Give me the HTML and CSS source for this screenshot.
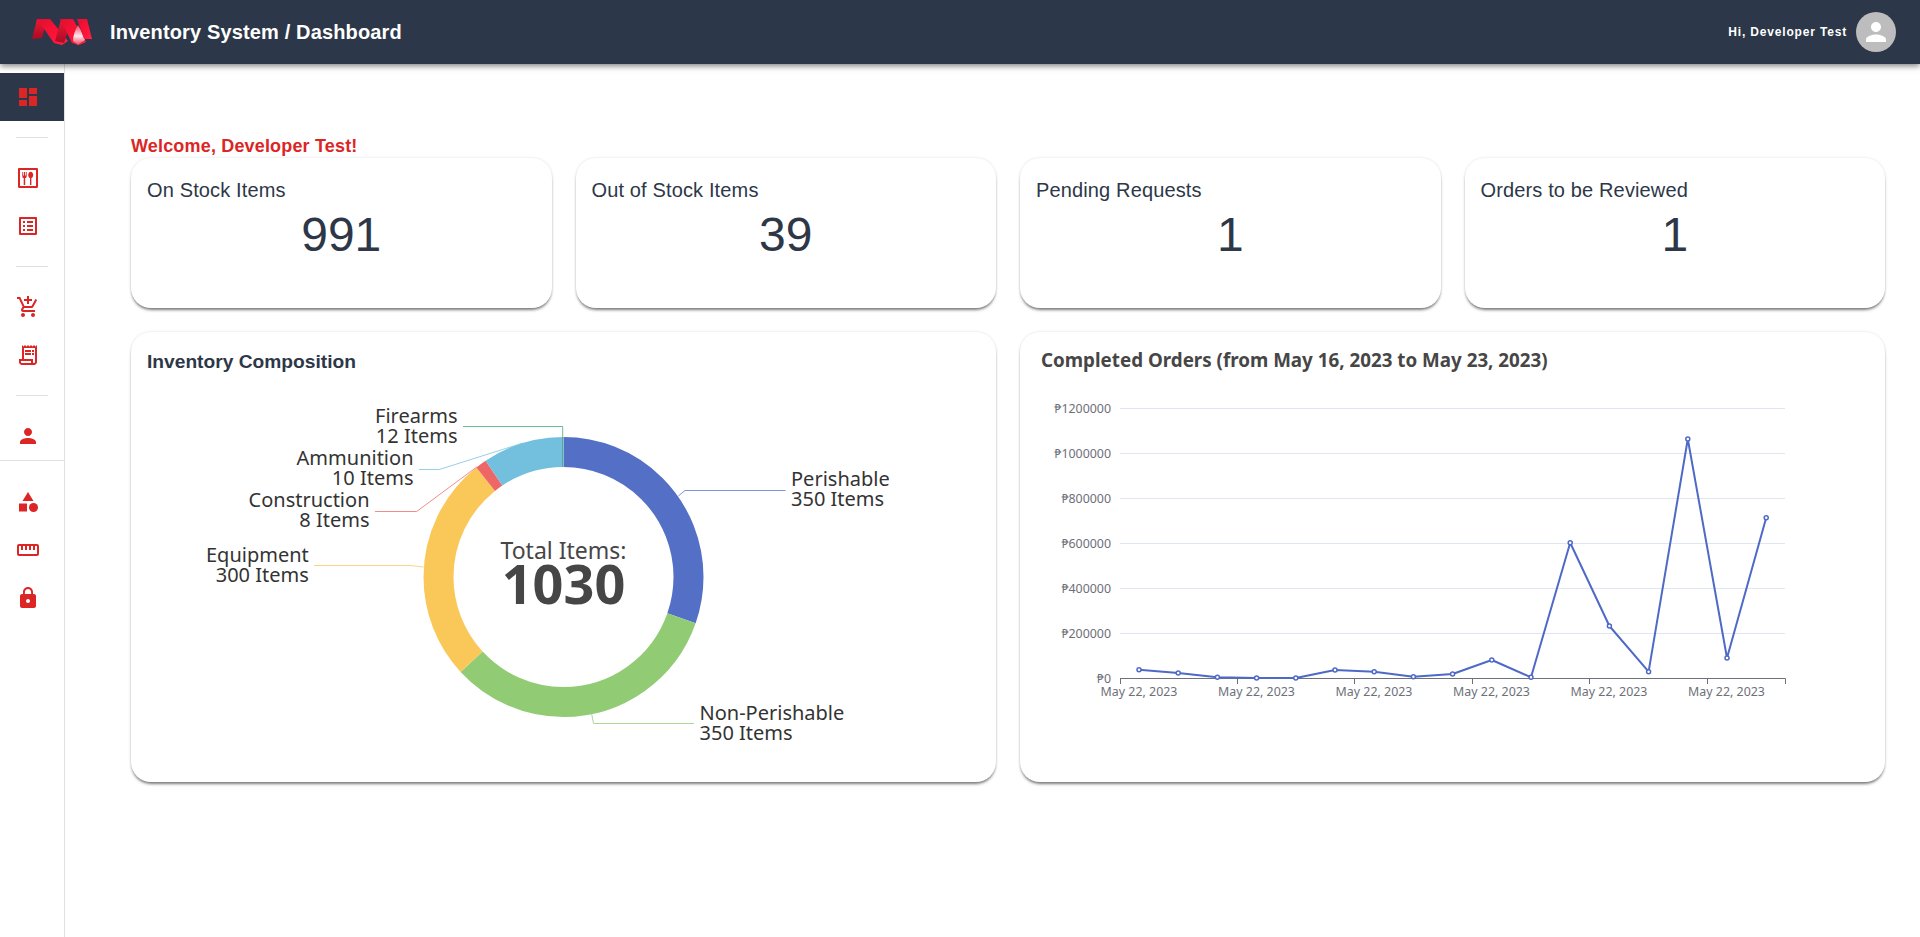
FILE: index.html
```html
<!DOCTYPE html>
<html lang="en">
<head>
<meta charset="utf-8">
<title>Inventory System / Dashboard</title>
<link rel="stylesheet" href="styles.css">
</head>
<body>
<header class="topbar">
  <div class="brand">
    <svg class="logo" viewBox="32 19 60 26" aria-hidden="true">
      <defs>
        <linearGradient id="lr" x1="0" y1="0" x2="1" y2="1"><stop offset="0" stop-color="#e0102e"/><stop offset=".6" stop-color="#ff1238"/><stop offset="1" stop-color="#ff2446"/></linearGradient>
        <linearGradient id="ld" x1="0" y1="0" x2="0" y2="1"><stop offset="0" stop-color="#ee1836"/><stop offset="1" stop-color="#a80c24"/></linearGradient>
        <linearGradient id="lw" x1="0" y1="0" x2="0" y2="1"><stop offset="0" stop-color="#f6405c"/><stop offset=".55" stop-color="#f9eaee"/><stop offset="1" stop-color="#f6405c"/></linearGradient>
      </defs>
      <path fill="url(#ld)" d="M32 39 37 19h10l-5 19z"/>
      <path fill="url(#lr)" d="M37 19h13l18 22-6 4-8-2z"/>
      <path fill="url(#ld)" d="M55 41 61 19h11l-8 24z"/>
      <path fill="url(#lr)" d="M60 19h13l13 23-7 3-7-2z"/>
      <path fill="url(#lw)" d="M78 25c-3 5-5 11-5 16l5 4c3-3 6-4 7-5-2-5-4-10-7-15z"/>
      <path fill="url(#lr)" d="M77 19h10l5 20h-8z"/>
    </svg>
    <h1 class="app-title">Inventory System / Dashboard</h1>
  </div>
  <div class="user">
    <span class="greeting">Hi, Developer Test</span>
    <span class="avatar">
      <svg class="avatar-icon" viewBox="0 0 24 24" aria-hidden="true"><path d="M12 12c2.21 0 4-1.79 4-4s-1.79-4-4-4-4 1.79-4 4 1.79 4 4 4zm0 2c-2.67 0-8 1.34-8 4v2h16v-2c0-2.66-5.33-4-8-4z"/></svg>
    </span>
  </div>
</header>

<div class="shell">
  <nav class="sidebar">
    <a class="nav-item active"><svg class="icon" viewBox="0 0 24 24"><path d="M3 13h8V3H3v10zm0 8h8v-6H3v6zm10 0h8V11h-8v10zm0-18v6h8V3h-8z"/></svg></a>
    <hr class="rule inset">
    <a class="nav-item"><svg class="icon" viewBox="0 0 24 24"><path fill-rule="evenodd" d="M3.2 2h17.6c.7 0 1.2.5 1.2 1.2v17.6c0 .7-.5 1.2-1.2 1.2H3.200c-.7 0-1.200-.5-1.200-1.200V3.200C2 2.500 2.500 2 3.200 2zM4 4v16h16V4z"/><path d="M6.300 6v4.200c0 1 .7 1.700 1.400 1.900V19h1.500v-6.900c.8-.2 1.500-.9 1.500-1.900V6h-.9v3.500h-.8V6h-1v3.500h-.8V6z"/><path d="M14.700 5.800c-1.400 0-2.500 1.400-2.500 3.200 0 1.500.8 2.700 1.800 3.100V19h1.400v-6.900c1-.4 1.800-1.600 1.800-3.100 0-1.800-1.100-3.200-2.500-3.200z"/></svg></a>
    <a class="nav-item"><svg class="icon" viewBox="0 0 24 24"><path d="M19 5v14H5V5h14m1.100-2H3.900c-.5 0-.9.4-.9.9v16.200c0 .4.4.9.9.9h16.200c.4 0 .9-.5.9-.9V3.900c0-.5-.5-.9-.9-.9zM11 7h6v2h-6V7zm0 4h6v2h-6v-2zm0 4h6v2h-6zM7 7h2v2H7zm0 4h2v2H7zm0 4h2v2H7z"/></svg></a>
    <hr class="rule inset">
    <a class="nav-item"><svg class="icon" viewBox="0 0 24 24"><path d="M11 9h2V6h3V4h-3V1h-2v3H8v2h3v3zm-4 9c-1.100 0-1.990.9-1.990 2S5.900 22 7 22s2-.9 2-2-.9-2-2-2zm10 0c-1.100 0-1.990.9-1.990 2s.89 2 1.990 2 2-.9 2-2-.9-2-2-2zm-9.830-3.250.03-.12.9-1.630h7.450c.75 0 1.410-.41 1.750-1.030l3.860-7.010L19.420 4h-.01l-1.100 2-2.760 5H8.530l-.13-.27L6.160 6l-.95-2-.94-2H1v2h2l3.600 7.590-1.350 2.450c-.16.28-.25.61-.25.96 0 1.100.9 2 2 2h12v-2H7.420c-.13 0-.25-.11-.25-.25z"/></svg></a>
    <a class="nav-item"><svg class="icon" viewBox="0 0 24 24"><path d="M19.500 3.500 18 2l-1.500 1.500L15 2l-1.500 1.500L12 2l-1.500 1.500L9 2 7.500 3.500 6 2v14H3v3c0 1.660 1.340 3 3 3h12c1.660 0 3-1.340 3-3V2l-1.500 1.500zM15 20H6c-.55 0-1-.45-1-1v-1h10v2zm4-1c0 .55-.45 1-1 1s-1-.45-1-1v-3H8V5h11v14z"/><path d="M9 7h6v2H9zm7 0h2v2h-2zM9 10h6v2H9zm7 0h2v2h-2z"/></svg></a>
    <hr class="rule inset">
    <a class="nav-item"><svg class="icon" viewBox="0 0 24 24"><path d="M12 12c2.210 0 4-1.790 4-4s-1.790-4-4-4-4 1.790-4 4 1.790 4 4 4zm0 2c-2.670 0-8 1.340-8 4v2h16v-2c0-2.660-5.330-4-8-4z"/></svg></a>
    <hr class="rule full">
    <a class="nav-item"><svg class="icon" viewBox="0 0 24 24"><path d="m12 2-5.500 9h11z"/><circle cx="17.500" cy="17.500" r="4.500"/><path d="M3 13.500h8v8H3z"/></svg></a>
    <a class="nav-item"><svg class="icon" viewBox="0 0 24 24"><path d="M21 6H3c-1.100 0-2 .9-2 2v8c0 1.100.9 2 2 2h18c1.100 0 2-.9 2-2V8c0-1.100-.9-2-2-2zm0 10H3V8h2v4h2V8h2v4h2V8h2v4h2V8h2v4h2V8h2v8z"/></svg></a>
    <a class="nav-item"><svg class="icon" viewBox="0 0 24 24"><path d="M18 8h-1V6c0-2.760-2.240-5-5-5S7 3.240 7 6v2H6c-1.100 0-2 .9-2 2v10c0 1.100.9 2 2 2h12c1.100 0 2-.9 2-2V10c0-1.100-.9-2-2-2zm-6 9c-1.100 0-2-.9-2-2s.9-2 2-2 2 .9 2 2-.9 2-2 2zm3.100-9H8.900V6c0-1.710 1.390-3.100 3.100-3.100 1.710 0 3.100 1.390 3.100 3.100v2z"/></svg></a>
  </nav>

  <main class="content">
    <p class="welcome">Welcome, Developer Test!</p>
    <section class="grid">
      <article class="card stat"><h2 class="stat-label">On Stock Items</h2><div class="stat-value">991</div></article>
      <article class="card stat"><h2 class="stat-label">Out of Stock Items</h2><div class="stat-value">39</div></article>
      <article class="card stat"><h2 class="stat-label">Pending Requests</h2><div class="stat-value">1</div></article>
      <article class="card stat"><h2 class="stat-label">Orders to be Reviewed</h2><div class="stat-value">1</div></article>

      <article class="card chart">
        <h2 class="chart-title">Inventory Composition</h2>
        <svg class="pie" viewBox="131 376 865 405" role="img" aria-label="Inventory composition donut chart">
          <g fill="none" stroke-width="30" transform="rotate(-90 563.5 577)">
            <circle cx="563.5" cy="577" r="125" pathLength="360" stroke="#5470c6" stroke-dasharray="109.3 250.7" stroke-dashoffset="0"/>
            <circle cx="563.5" cy="577" r="125" pathLength="360" stroke="#91cc75" stroke-dasharray="118 242" stroke-dashoffset="-109.3"/>
            <circle cx="563.5" cy="577" r="125" pathLength="360" stroke="#fac858" stroke-dasharray="94.2 265.8" stroke-dashoffset="-227.3"/>
            <circle cx="563.5" cy="577" r="125" pathLength="360" stroke="#ee6666" stroke-dasharray="4.7 355.3" stroke-dashoffset="-321.5"/>
            <circle cx="563.5" cy="577" r="125" pathLength="360" stroke="#73c0de" stroke-dasharray="33.6 326.4" stroke-dashoffset="-326.2"/>
          </g>
          <g fill="none" class="leaders">
            <polyline stroke="#5470c6" points="678.3,496 685,490.500 785.700,490.500"/>
            <polyline stroke="#91cc75" points="591.700,714 593.500,723.500 694,723.500"/>
            <polyline stroke="#fac858" points="423.700,567 410,565.500 314,565.500"/>
            <polyline stroke="#ee6666" points="476.700,467 416.700,511.500 375,511.500"/>
            <polyline stroke="#73c0de" points="523,443 439.300,469.500 419,469.500"/>
            <polyline stroke="#3ba272" points="562.700,467 562.700,426.500 463,426.500"/>
          </g>
          <g class="pie-label end">
            <text x="457.500" y="422.700">Firearms</text><text x="457.500" y="442.700">12 Items</text>
            <text x="413.500" y="464.700">Ammunition</text><text x="413.500" y="484.700">10 Items</text>
            <text x="369.500" y="506.700">Construction</text><text x="369.500" y="526.700">8 Items</text>
            <text x="308.800" y="562">Equipment</text><text x="308.800" y="582">300 Items</text>
          </g>
          <g class="pie-label">
            <text x="791" y="485.700">Perishable</text><text x="791" y="505.700">350 Items</text>
            <text x="699.500" y="719.700">Non-Perishable</text><text x="699.500" y="739.700">350 Items</text>
          </g>
          <text class="pie-total-label" x="563.5" y="558.500">Total Items:</text>
          <text class="pie-total" x="563.5" y="603.500">1030</text>
        </svg>
      </article>

      <article class="card chart">
        <svg class="line" viewBox="1020 332 865 450" role="img" aria-label="Completed orders line chart">
          <text class="line-title" x="1041" y="367">Completed Orders (from May 16, 2023 to May 23, 2023)</text>
          <g class="gridlines">
            <path d="M1120 408.500H1785M1120 453.500H1785M1120 498.500H1785M1120 543.500H1785M1120 588.500H1785M1120 633.500H1785"/>
          </g>
          <path class="axis" d="M1120 678.500H1785.500M1120.500 678.500V684M1237.500 678.500V684M1354.500 678.500V684M1472.500 678.500V684M1589.500 678.500V684M1707.500 678.500V684M1785.500 678.500V684"/>
          <g class="tick end">
            <text x="1111" y="412.500">₱1200000</text>
            <text x="1111" y="457.500">₱1000000</text>
            <text x="1111" y="502.500">₱800000</text>
            <text x="1111" y="547.500">₱600000</text>
            <text x="1111" y="592.500">₱400000</text>
            <text x="1111" y="637.500">₱200000</text>
            <text x="1111" y="682.500">₱0</text>
          </g>
          <g class="tick mid">
            <text x="1139" y="696">May 22, 2023</text>
            <text x="1256.500" y="696">May 22, 2023</text>
            <text x="1374" y="696">May 22, 2023</text>
            <text x="1491.500" y="696">May 22, 2023</text>
            <text x="1609" y="696">May 22, 2023</text>
            <text x="1726.500" y="696">May 22, 2023</text>
          </g>
          <polyline class="series" points="1139,669.700 1178.200,673 1217.400,677.300 1256.600,678 1295.800,678 1335,670 1374.200,671.700 1413.400,676.700 1452.600,674 1491.800,660 1531,677.300 1570.200,542.700 1609.400,626 1648.600,671.700 1687.800,439 1727,658 1766.200,517.700"/>
          <g class="dots">
            <circle cx="1139" cy="669.700" r="2"/><circle cx="1178.200" cy="673" r="2"/><circle cx="1217.400" cy="677.300" r="2"/><circle cx="1256.600" cy="678" r="2"/><circle cx="1295.800" cy="678" r="2"/><circle cx="1335" cy="670" r="2"/><circle cx="1374.200" cy="671.700" r="2"/><circle cx="1413.400" cy="676.700" r="2"/><circle cx="1452.600" cy="674" r="2"/><circle cx="1491.800" cy="660" r="2"/><circle cx="1531" cy="677.300" r="2"/><circle cx="1570.200" cy="542.700" r="2"/><circle cx="1609.400" cy="626" r="2"/><circle cx="1648.600" cy="671.700" r="2"/><circle cx="1687.800" cy="439" r="2"/><circle cx="1727" cy="658" r="2"/><circle cx="1766.200" cy="517.700" r="2"/>
          </g>
        </svg>
      </article>
    </section>
  </main>
</div>
</body>
</html>
```

FILE: styles.css
```css
* { box-sizing: border-box; }
html, body { margin: 0; height: 100%; }
body {
  display: flex;
  flex-direction: column;
  height: 100vh;
  overflow: hidden;
  background: #fff;
  font-family: "Liberation Sans", Arial, sans-serif;
  color: #2d3748;
}
.topbar {
  position: relative;
  z-index: 2;
  flex: 0 0 64px;
  display: flex;
  align-items: center;
  justify-content: space-between;
  padding: 0 24px 0 32px;
  background: #2c3749;
  box-shadow: 0 2px 6px rgba(0, 0, 0, .5);
}
.brand { display: flex; align-items: center; gap: 18px; }
.logo { display: block; width: 60px; height: 26px; }
.app-title { margin: 0; font-size: 20px; font-weight: 700; color: #fff; line-height: 24px; letter-spacing: .14px; }
.user { display: flex; align-items: center; gap: 9px; }
.greeting { font-size: 12px; font-weight: 700; color: #fff; letter-spacing: .83px; }
.avatar {
  width: 40px;
  height: 40px;
  border-radius: 50%;
  background: #bdbdbd;
  display: flex;
  align-items: center;
  justify-content: center;
}
.avatar-icon { width: 30px; height: 30px; fill: #fff; }

.shell { flex: 1; display: flex; min-height: 0; }
.sidebar {
  flex: 0 0 65px;
  border-right: 1px solid #e0e0e0;
  padding-top: 9px;
  display: flex;
  flex-direction: column;
}
.nav-item {
  height: 48px;
  display: flex;
  align-items: center;
  padding-left: 16px;
  flex: none;
}
.nav-item.active { background: #2c3749; }
.icon { width: 24px; height: 24px; fill: #dc2626; display: block; }
.rule { border: 0; height: 1px; background: #e0e0e0; margin: 0; flex: none; }
.rule.inset { margin: 16px 16px; }
.rule.full { margin: 0 0 17px; }

.content { flex: 1; padding: 72px 35px 0 66px; min-width: 0; }
.welcome { margin: 0 0 2px; font-size: 18px; font-weight: 700; line-height: 20px; letter-spacing: .17px; color: #dc2626; }
.grid {
  display: grid;
  grid-template-columns: repeat(4, 1fr);
  gap: 24px;
}
.card {
  background: #fff;
  border-radius: 20px;
  box-shadow: 0 3px 3px -1px rgba(0, 0, 0, .5), 0 0 3px rgba(0, 0, 0, .12);
}
.stat { height: 150px; padding: 20px 16px 0; }
.stat-label { margin: 0; font-size: 20px; font-weight: 400; line-height: 24px; letter-spacing: .14px; color: #2d3748; }
.stat-value { margin-top: 4px; font-size: 48px; line-height: 58px; text-align: center; color: #2d3748; }

.chart { grid-column: span 2; height: 450px; overflow: hidden; }
.chart-title { margin: 0; padding: 16px 16px 0; font-size: 19.200px; font-weight: 700; line-height: 28px; color: #2d3748; }
.pie { display: block; width: 865px; height: 405px; }
.line { display: block; width: 865px; height: 450px; }

.leaders polyline { stroke-width: 1; opacity: .75; }
.pie-label text { font-family: "Noto Sans", sans-serif; font-size: 20px; fill: #333; }
.pie-label.end text { text-anchor: end; }
.pie-total-label { font-family: "Noto Sans", sans-serif; font-size: 23px; fill: #464646; text-anchor: middle; }
.pie-total { font-family: "Noto Sans", sans-serif; font-size: 54px; font-weight: 700; fill: #464646; text-anchor: middle; }

.line-title { font-family: "Noto Sans", sans-serif; font-size: 18.800px; font-weight: 700; fill: #464646; }
.gridlines path { stroke: #e0e6f1; stroke-width: 1; fill: none; }
.axis { stroke: #6e7079; stroke-width: 1; fill: none; }
.tick text { font-family: "Noto Sans", sans-serif; font-size: 12.400px; fill: #6e7079; }
.tick.end text { text-anchor: end; }
.tick.mid text { text-anchor: middle; }
.series { fill: none; stroke: #4f69c6; stroke-width: 2; stroke-linejoin: bevel; }
.dots circle { fill: #fff; stroke: #4f69c6; stroke-width: 1.500; }
```
